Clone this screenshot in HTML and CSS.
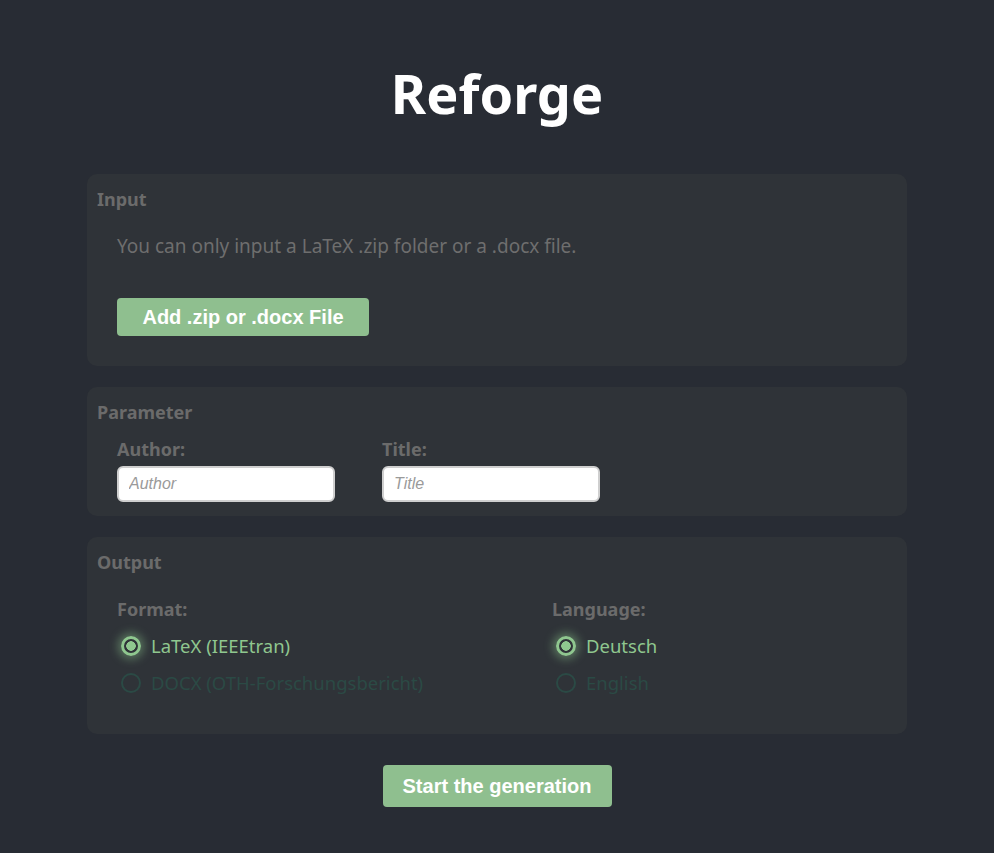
FILE: index.html
```html
<!DOCTYPE html>
<html lang="en">
<head>
<meta charset="utf-8">
<title>Reforge</title>
<link rel="stylesheet" href="styles.css">
</head>
<body>
<main class="page">
  <h1 class="title">Reforge</h1>

  <section class="card card-input">
    <h2 class="card-title">Input</h2>
    <p class="hint">You can only input a LaTeX .zip folder or a .docx file.</p>
    <button class="btn btn-file" type="button">Add .zip or .docx File</button>
  </section>

  <section class="card card-param">
    <h2 class="card-title">Parameter</h2>
    <div class="fields">
      <label class="field">
        <span class="field-label">Author:</span>
        <input class="text-input" type="text" placeholder="Author">
      </label>
      <label class="field">
        <span class="field-label">Title:</span>
        <input class="text-input" type="text" placeholder="Title">
      </label>
    </div>
  </section>

  <section class="card card-output">
    <h2 class="card-title">Output</h2>
    <div class="options">
      <div class="group">
        <span class="field-label">Format:</span>
        <label class="radio checked"><span class="dot"></span><span>LaTeX (IEEEtran)</span></label>
        <label class="radio"><span class="dot"></span><span>DOCX (OTH-Forschungsbericht)</span></label>
      </div>
      <div class="group">
        <span class="field-label">Language:</span>
        <label class="radio checked"><span class="dot"></span><span>Deutsch</span></label>
        <label class="radio"><span class="dot"></span><span>English</span></label>
      </div>
    </div>
  </section>

  <div class="actions">
    <button class="btn btn-start" type="button">Start the generation</button>
  </div>
</main>
</body>
</html>
```

FILE: styles.css
```css
* { box-sizing: border-box; }
html, body { margin: 0; padding: 0; }
body {
  background: #282c34;
  font-family: "Noto Sans", "Open Sans", sans-serif;
  color: #6e6e6e;
  min-height: 853px;
}
.page {
  width: 820px;
  margin: 0 auto;
  padding-top: 58px;
}
.title {
  margin: 0 0 46px;
  text-align: center;
  color: #ffffff;
  font-size: 54px;
  font-weight: 700;
  line-height: 70px;
}
.card {
  background: #2f3338;
  border-radius: 10px;
  padding: 12px 10px 0;
  margin-bottom: 21px;
}
.card-title {
  margin: 0;
  font-size: 18px;
  font-weight: 700;
  line-height: 26px;
  color: #6b6b6b;
}
.card-input { height: 192px; }
.card-param { height: 129px; }
.card-output { height: 197px; }
.hint {
  margin: 20px 0 0 20px;
  font-size: 19px;
  line-height: 28px;
  color: #6e6e6e;
}
.btn {
  border: none;
  background: #8fbf8f;
  color: #ffffff;
  font-family: "Liberation Sans", Arial, sans-serif;
  font-weight: 700;
  font-size: 20px;
  border-radius: 4px;
  cursor: pointer;
}
.btn-file {
  margin: 38px 0 0 20px;
  width: 252px;
  height: 38px;
}
.fields {
  display: flex;
  gap: 47px;
  padding-left: 20px;
  margin-top: 11px;
}
.field {
  display: flex;
  flex-direction: column;
  gap: 4px;
}
.field-label {
  font-size: 18px;
  font-weight: 700;
  line-height: 26px;
  color: #6b6b6b;
}
.text-input {
  width: 218px;
  height: 36px;
  border: 2px solid #cfcfcf;
  border-radius: 6px;
  background: #ffffff;
  padding: 0 10px;
  font-family: "Liberation Sans", Arial, sans-serif;
  font-size: 16px;
  outline: none;
}
.text-input::placeholder {
  color: #9a9a9a;
  font-style: italic;
}
.options {
  display: grid;
  grid-template-columns: 435px 1fr;
  padding-left: 20px;
  margin-top: 21px;
}
.group {
  display: flex;
  flex-direction: column;
}
.group .field-label { margin-bottom: 5px; }
.radio {
  display: flex;
  align-items: center;
  gap: 10px;
  height: 37px;
  padding-left: 4px;
  font-size: 18.5px;
  color: #2b4a45;
}
.radio .dot {
  width: 20px;
  height: 20px;
  border-radius: 50%;
  border: 2px solid #2b4a45;
  flex: none;
}
.radio.checked { color: #8fc78f; }
.radio.checked .dot {
  border: 3px solid #8fc78f;
  background: radial-gradient(circle, #8fc78f 0 4.5px, #2f3338 5px);
  box-shadow: 0 0 10px 3px rgba(143, 199, 143, 0.45);
}
.actions {
  display: flex;
  justify-content: center;
  margin-top: 31px;
}
.btn-start {
  width: 229px;
  height: 42px;
}
```
